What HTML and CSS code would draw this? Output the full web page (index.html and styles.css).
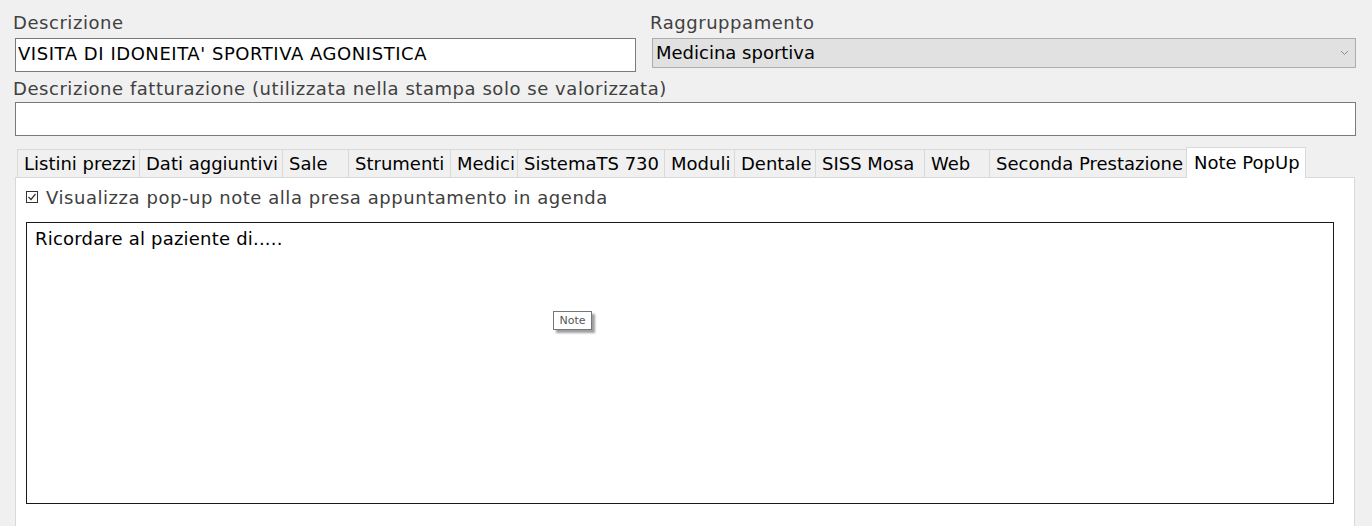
FILE: index.html
```html
<!DOCTYPE html>
<html lang="it">
<head>
<meta charset="utf-8">
<title>Prestazione</title>
<link rel="stylesheet" href="styles.css">
</head>
<body>
<div class="form">
  <div class="row1">
    <div class="col col-desc">
      <div class="label">Descrizione</div>
      <div class="input">VISITA DI IDONEITA' SPORTIVA AGONISTICA</div>
    </div>
    <div class="col col-group">
      <div class="label">Raggruppamento</div>
      <div class="select">
        <span>Medicina sportiva</span>
        <svg class="chev" width="9" height="6" viewBox="0 0 9 6"><path d="M1 1 L4.5 4.5 L8 1" fill="none" stroke="#8a8a8a" stroke-width="1"/></svg>
      </div>
    </div>
  </div>
  <div class="row2">
    <div class="label">Descrizione fatturazione (utilizzata nella stampa solo se valorizzata)</div>
    <div class="input-wide"></div>
  </div>
  <div class="tabs">
    <div class="tab" style="width:123px">Listini prezzi</div>
    <div class="tab" style="width:144px">Dati aggiuntivi</div>
    <div class="tab" style="width:67px">Sale</div>
    <div class="tab" style="width:103px">Strumenti</div>
    <div class="tab" style="width:68px">Medici</div>
    <div class="tab" style="width:148px">SistemaTS 730</div>
    <div class="tab" style="width:71px">Moduli</div>
    <div class="tab" style="width:82px">Dentale</div>
    <div class="tab" style="width:110px">SISS Mosa</div>
    <div class="tab" style="width:66px">Web</div>
    <div class="tab" style="width:198px">Seconda Prestazione</div>
    <div class="tab active" style="width:120px">Note PopUp</div>
  </div>
  <div class="panel">
    <div class="check">
      <svg class="cb" width="12" height="12" viewBox="0 0 12 12"><rect x="0.5" y="0.5" width="11" height="11" fill="#fff" stroke="#333"/><path d="M2.5 6 L5 8.5 L9.5 3" fill="none" stroke="#333" stroke-width="1.2"/></svg>
      <span>Visualizza pop-up note alla presa appuntamento in agenda</span>
    </div>
    <div class="notes">
      <div class="notes-text">Ricordare al paziente di.....</div>
      <div class="tooltip">Note</div>
    </div>
  </div>
</div>
</body>
</html>
```

FILE: styles.css
```css
* { box-sizing: border-box; }
html, body { margin: 0; padding: 0; }
body {
  background: #f0f0f0;
  font-family: "DejaVu Sans", Verdana, sans-serif;
  font-size: 18px;
  letter-spacing: 0.55px;
  color: #000;
  width: 1372px;
  height: 526px;
  overflow: hidden;
}
.form { padding: 11px 0 0 0; }
.row1 { display: flex; padding-left: 13px; }
.col-desc { width: 623px; }
.col-group { width: 706px; margin-left: 14px; }
.label {
  color: #404040;
  line-height: 23px;
  height: 22px;
  white-space: nowrap;
}
.input {
  margin-top: 5px;
  margin-left: 2px;
  height: 34px;
  border: 1px solid #7a7a7a;
  background: #fff;
  line-height: 30px;
  padding-left: 2px;
  white-space: nowrap;
}
.input-wide {
  margin: 3px 0 0 2px;
  width: 1341px;
  height: 34px;
  border: 1px solid #7a7a7a;
  background: #fff;
}
.select {
  margin-top: 5px;
  margin-left: 2px;
  height: 30px;
  border: 1px solid #adadad;
  background: #e1e1e1;
  display: flex;
  align-items: center;
  justify-content: space-between;
  padding: 0 6px 0 3px;
  letter-spacing: 0;
}
.select span { line-height: 28px; }
.row2 { padding-left: 13px; margin-top: 5px; }
.tabs {
  display: flex;
  align-items: flex-end;
  margin: 11px 0 0 17px;
  height: 30px;
  letter-spacing: 0;
}
.tab {
  height: 28px;
  line-height: 28px;
  padding-left: 6px;
  background: #f0f0f0;
  border: 1px solid #d9d9d9;
  border-bottom: none;
  margin-left: -1px;
  white-space: nowrap;
  overflow: hidden;
}
.tab:first-child { margin-left: 0; }
.tab.active {
  background: #fff;
  line-height: 29px;
  padding-left: 7px;
  position: relative;
  z-index: 1;
  margin-bottom: -1px;
  height: 31px;
}
.panel {
  margin-left: 15px;
  width: 1340px;
  height: 360px;
  background: #fff;
  border: 1px solid #d9d9d9;
  border-bottom: none;
  padding: 7px 0 0 10px;
}
.check {
  display: flex;
  align-items: center;
  gap: 8px;
  color: #404040;
  height: 24px;
}
.cb { flex: none; }
.notes {
  position: relative;
  margin-top: 13px;
  width: 1308px;
  height: 282px;
  border: 1px solid #1a1a1a;
  padding: 5px 0 0 8px;
  letter-spacing: 0.2px;
}
.notes-text { line-height: 22px; }
.tooltip {
  position: absolute;
  left: 526px;
  top: 88px;
  width: 39px;
  height: 19px;
  border: 1px solid #767676;
  background: #fff;
  font-size: 11px;
  letter-spacing: 0;
  line-height: 17px;
  text-align: center;
  color: #575757;
  box-shadow: 3px 3px 2px #a0a0a0;
}
```
